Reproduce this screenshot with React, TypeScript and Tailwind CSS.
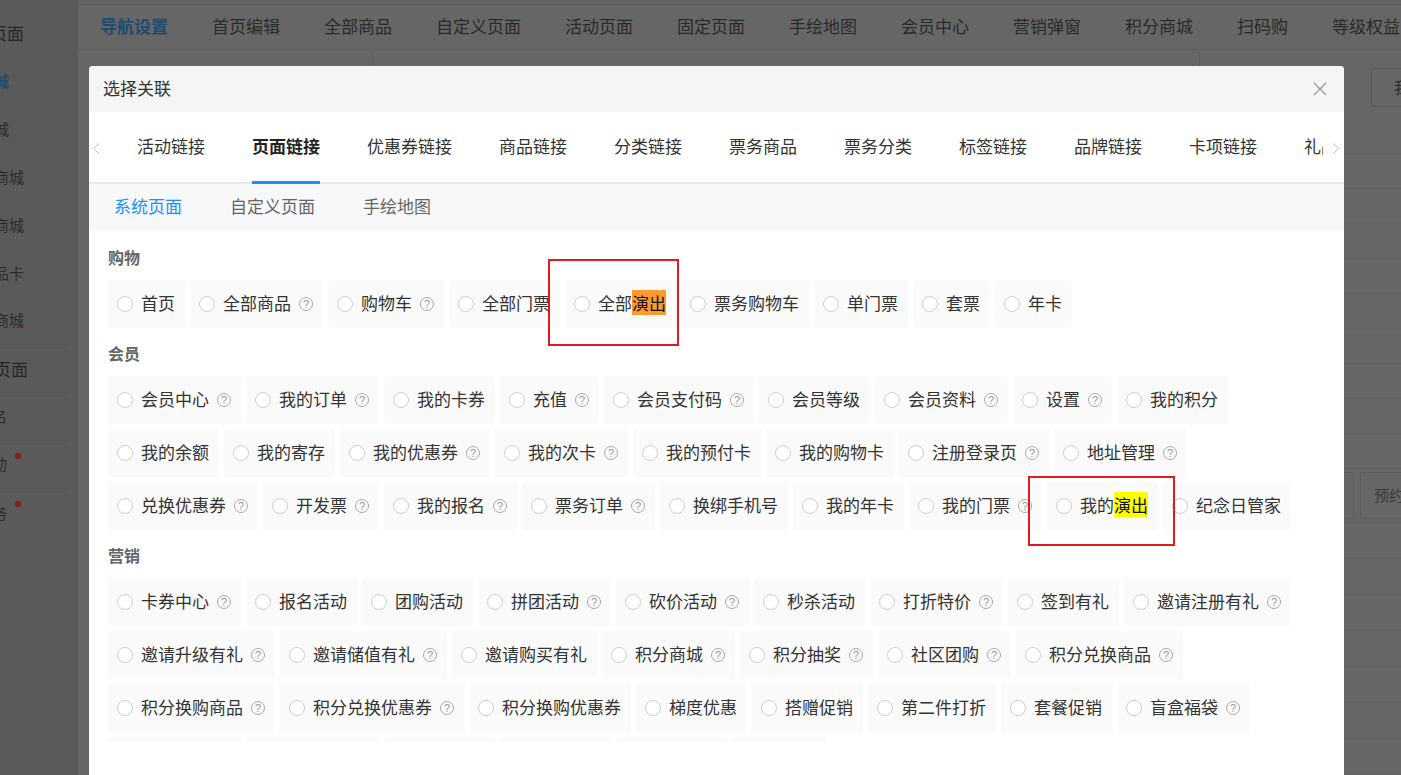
import React from "react";

type Item = { label: string; tip?: boolean; hl?: string; hlColor?: string };

const TOP_NAV = ["导航设置", "首页编辑", "全部商品", "自定义页面", "活动页面", "固定页面", "手绘地图", "会员中心", "营销弹窗", "积分商城", "扫码购", "等级权益"];

const SIDE = [
  { label: "店铺页面", cls: "-ml-[44px] text-[17px] text-[#262626]" },
  { label: "微商城", cls: "-ml-[36px] text-[15px] text-[#1c4c72] font-bold" },
  { label: "小商城", cls: "-ml-[36px] text-[15px] text-[#2a2a2a]" },
  { label: "积分商城", cls: "-ml-[36px] text-[15px] text-[#2a2a2a]" },
  { label: "门票商城", cls: "-ml-[36px] text-[15px] text-[#2a2a2a]" },
  { label: "电子品卡", cls: "-ml-[36px] text-[15px] text-[#2a2a2a]" },
  { label: "演出商城", cls: "-ml-[36px] text-[15px] text-[#2a2a2a]", line: true },
  { label: "固定页面", cls: "-ml-[40px] text-[17px] text-[#262626]", line: true },
  { label: "报名", cls: "-ml-[23px] text-[15px] text-[#2a2a2a]", line: true },
  { label: "活动", cls: "-ml-[23px] text-[15px] text-[#2a2a2a]", dot: true, line: true },
  { label: "服务", cls: "-ml-[23px] text-[15px] text-[#2a2a2a]", dot: true },
];

const TABS = ["活动链接", "页面链接", "优惠券链接", "商品链接", "分类链接", "票务商品", "票务分类", "标签链接", "品牌链接", "卡项链接", "礼品卡链接"];

const SECTIONS: { title: string; items: Item[] }[] = [
  {
    title: "购物",
    items: [
      { label: "首页" },
      { label: "全部商品", tip: true },
      { label: "购物车", tip: true },
      { label: "全部门票" },
      { label: "全部", hl: "演出", hlColor: "bg-[#ff9a2e]" },
      { label: "票务购物车" },
      { label: "单门票" },
      { label: "套票" },
      { label: "年卡" },
    ],
  },
  {
    title: "会员",
    items: [
      { label: "会员中心", tip: true },
      { label: "我的订单", tip: true },
      { label: "我的卡券" },
      { label: "充值", tip: true },
      { label: "会员支付码", tip: true },
      { label: "会员等级" },
      { label: "会员资料", tip: true },
      { label: "设置", tip: true },
      { label: "我的积分" },
      { label: "我的余额" },
      { label: "我的寄存" },
      { label: "我的优惠券", tip: true },
      { label: "我的次卡", tip: true },
      { label: "我的预付卡" },
      { label: "我的购物卡" },
      { label: "注册登录页", tip: true },
      { label: "地址管理", tip: true },
      { label: "兑换优惠券", tip: true },
      { label: "开发票", tip: true },
      { label: "我的报名", tip: true },
      { label: "票务订单", tip: true },
      { label: "换绑手机号" },
      { label: "我的年卡" },
      { label: "我的门票", tip: true },
      { label: "我的", hl: "演出", hlColor: "bg-[#ffff00]" },
      { label: "纪念日管家" },
    ],
  },
  {
    title: "营销",
    items: [
      { label: "卡券中心", tip: true },
      { label: "报名活动" },
      { label: "团购活动" },
      { label: "拼团活动", tip: true },
      { label: "砍价活动", tip: true },
      { label: "秒杀活动" },
      { label: "打折特价", tip: true },
      { label: "签到有礼" },
      { label: "邀请注册有礼", tip: true },
      { label: "邀请升级有礼", tip: true },
      { label: "邀请储值有礼", tip: true },
      { label: "邀请购买有礼" },
      { label: "积分商城", tip: true },
      { label: "积分抽奖", tip: true },
      { label: "社区团购", tip: true },
      { label: "积分兑换商品", tip: true },
      { label: "积分换购商品", tip: true },
      { label: "积分兑换优惠券", tip: true },
      { label: "积分换购优惠券" },
      { label: "梯度优惠" },
      { label: "搭赠促销" },
      { label: "第二件打折" },
      { label: "套餐促销" },
      { label: "盲盒福袋", tip: true },
      { label: "充值有礼", tip: true },
      { label: "消费有礼", tip: true },
      { label: "幸运抽奖" },
      { label: "集卡活动" },
      { label: "限时折扣" },
      { label: "大转盘" },
    ],
  },
];

function LinkItem({ item }: { item: Item }) {
  return (
    <div className="flex items-center h-[48px] pl-[9px] pr-[10px] pb-[3px] bg-[#fafafa] rounded-[3px]">
      <span className="w-4 h-4 shrink-0 rounded-full border border-[#cfcfcf] bg-white mt-[3px]" />
      <span className="ml-2 text-[17px] leading-[19px] text-[#333] whitespace-nowrap">
        {item.label}
        {item.hl && <span className={`${item.hlColor} text-[#111]`}>{item.hl}</span>}
      </span>
      {item.tip && (
        <span className="ml-2 mt-[3px] w-[14px] h-[14px] shrink-0 rounded-full border border-[#aaa] text-[#999] text-[11px] leading-none flex items-center justify-center font-['Liberation_Sans',sans-serif]">
          ?
        </span>
      )}
    </div>
  );
}

export default function App() {
  return (
    <div className="relative w-[1401px] h-[775px] overflow-hidden bg-[#666] font-['Noto_Sans_CJK_SC','Noto_Sans',sans-serif]">
      {/* dimmed page behind the dialog */}
      <div className="flex h-full">
        <aside className="w-[78px] shrink-0 bg-[#5a5a5a] overflow-hidden pt-[9px]">
          {SIDE.map((s) => (
            <div key={s.label} className={`relative h-[48px] flex items-center ${s.line ? "border-b border-[#545454] w-[67px]" : ""}`}>
              <span className={`whitespace-nowrap ${s.cls}`}>{s.label}</span>
              {s.dot && <span className="absolute left-[15px] top-[12px] w-[6px] h-[6px] rounded-full bg-[#8a1c1c]" />}
            </div>
          ))}
        </aside>
        <div className="flex-1 flex flex-col min-w-0 min-h-0">
          <div className="h-[5px] shrink-0 bg-[#646464] border-b border-[#5f5f5f]" />
          <nav className="h-[45px] shrink-0 flex items-center gap-[44px] pl-[22px] pb-[2px] border-b border-[#5f5f5f] text-[17px] whitespace-nowrap overflow-hidden text-[#2a2a2a]">
            {TOP_NAV.map((n, i) => (
              <span key={n} className={i === 0 ? "font-bold text-[#1c4c72]" : ""}>
                {n}
              </span>
            ))}
          </nav>
          <div className="flex flex-1 min-h-0 overflow-hidden">
            <div className="w-[295px] shrink-0 border-r border-[#5f5f5f]" />
            <div className="w-[827px] shrink-0 border-r border-[#5f5f5f]" />
            <div className="flex-1 min-w-0 overflow-hidden pt-[18px]">
              <div className="ml-[171px] w-[80px] h-[39px] border border-[#5a5a5a] rounded-[4px] flex items-center pl-[22px] text-[15px] text-[#2a2a2a] whitespace-nowrap">
                我的
              </div>
              <div className="mt-[12px]">
                {Array.from({ length: 10 }).map((_, i) => (
                  <div key={i} className="h-[35px] border-b border-[#616161]" />
                ))}
                <div className="h-[54px] flex items-center gap-[6px] pl-[127px] border-b border-[#616161]">
                  <div className="w-[27px] h-[47px] shrink-0 border border-[#5e5e5e] rounded-[2px]" />
                  <div className="w-[80px] h-[47px] shrink-0 border border-[#5e5e5e] rounded-[2px] flex items-center pl-[13px] text-[15px] text-[#3a3a3a] whitespace-nowrap">
                    预约时间
                  </div>
                </div>
                {Array.from({ length: 8 }).map((_, i) => (
                  <div key={i} className="h-[36px] border-b border-[#616161]" />
                ))}
              </div>
            </div>
          </div>
        </div>
      </div>

      {/* dialog */}
      <div className="absolute left-[89px] top-[66px] w-[1255px] h-[720px] bg-white rounded-t-[4px] overflow-hidden flex flex-col">
        <div className="h-[46px] shrink-0 bg-[#f5f5f5] flex items-center justify-between pl-[14px] pr-[17px]">
          <span className="text-[17px] text-[#333] pb-[2px]">选择关联</span>
          <svg width="14" height="14" viewBox="0 0 14 14" fill="none" stroke="#999" strokeWidth="1.3">
            <path d="M1 1L13 13M13 1L1 13" />
          </svg>
        </div>

        <div className="h-[72px] shrink-0 flex shadow-[inset_0_-2px_0_#e4e7eb]">
          <div className="w-[24px] shrink-0 flex items-center pl-[4px]">
            <svg width="6" height="11" viewBox="0 0 6 11" fill="none" stroke="#bdbdbd" strokeWidth="1">
              <path d="M5.5 0.5L0.8 5.5L5.5 10.5" />
            </svg>
          </div>
          <div className="flex-1 overflow-hidden flex pl-[24px] gap-[47px]">
            {TABS.map((t, i) => (
              <div
                key={t}
                className={`h-full flex items-center pb-[4px] shrink-0 whitespace-nowrap text-[17px] ${
                  i === 1 ? "font-bold text-[#222] shadow-[inset_0_-3px_0_#1890ff]" : "text-[#333]"
                }`}
              >
                {t}
              </div>
            ))}
          </div>
          <div className="w-[21px] shrink-0 flex items-center pl-[10px]">
            <svg width="6" height="11" viewBox="0 0 6 11" fill="none" stroke="#bdbdbd" strokeWidth="1">
              <path d="M0.5 0.5L5.2 5.5L0.5 10.5" />
            </svg>
          </div>
        </div>

        <div className="h-[47px] shrink-0 bg-[#f7f8fa] flex items-center pl-[25px] pb-[4px] gap-[48px] text-[17px]">
          <span className="text-[#1890ff]">系统页面</span>
          <span className="text-[#666]">自定义页面</span>
          <span className="text-[#666]">手绘地图</span>
        </div>

        <div className="h-[511px] shrink-0 overflow-hidden px-[19px] pt-[15px]">
          {SECTIONS.map((sec, si) => (
            <section key={sec.title} className={si === 0 ? "" : "mt-[14px]"}>
              <h3 className="text-[16px] leading-[22px] font-bold text-[#666] mb-[12px]">{sec.title}</h3>
              <div className="flex flex-wrap gap-[5px]">
                {sec.items.map((it) => (
                  <LinkItem key={it.label + (it.hl ?? "")} item={it} />
                ))}
              </div>
            </section>
          ))}
        </div>
      </div>

      {/* annotation boxes */}
      <div className="absolute left-[548px] top-[259px] w-[131px] h-[87px] border-2 border-[#e3191f]" />
      <div className="absolute left-[1028px] top-[476px] w-[147px] h-[70px] border-2 border-[#e3191f]" />
    </div>
  );
}
